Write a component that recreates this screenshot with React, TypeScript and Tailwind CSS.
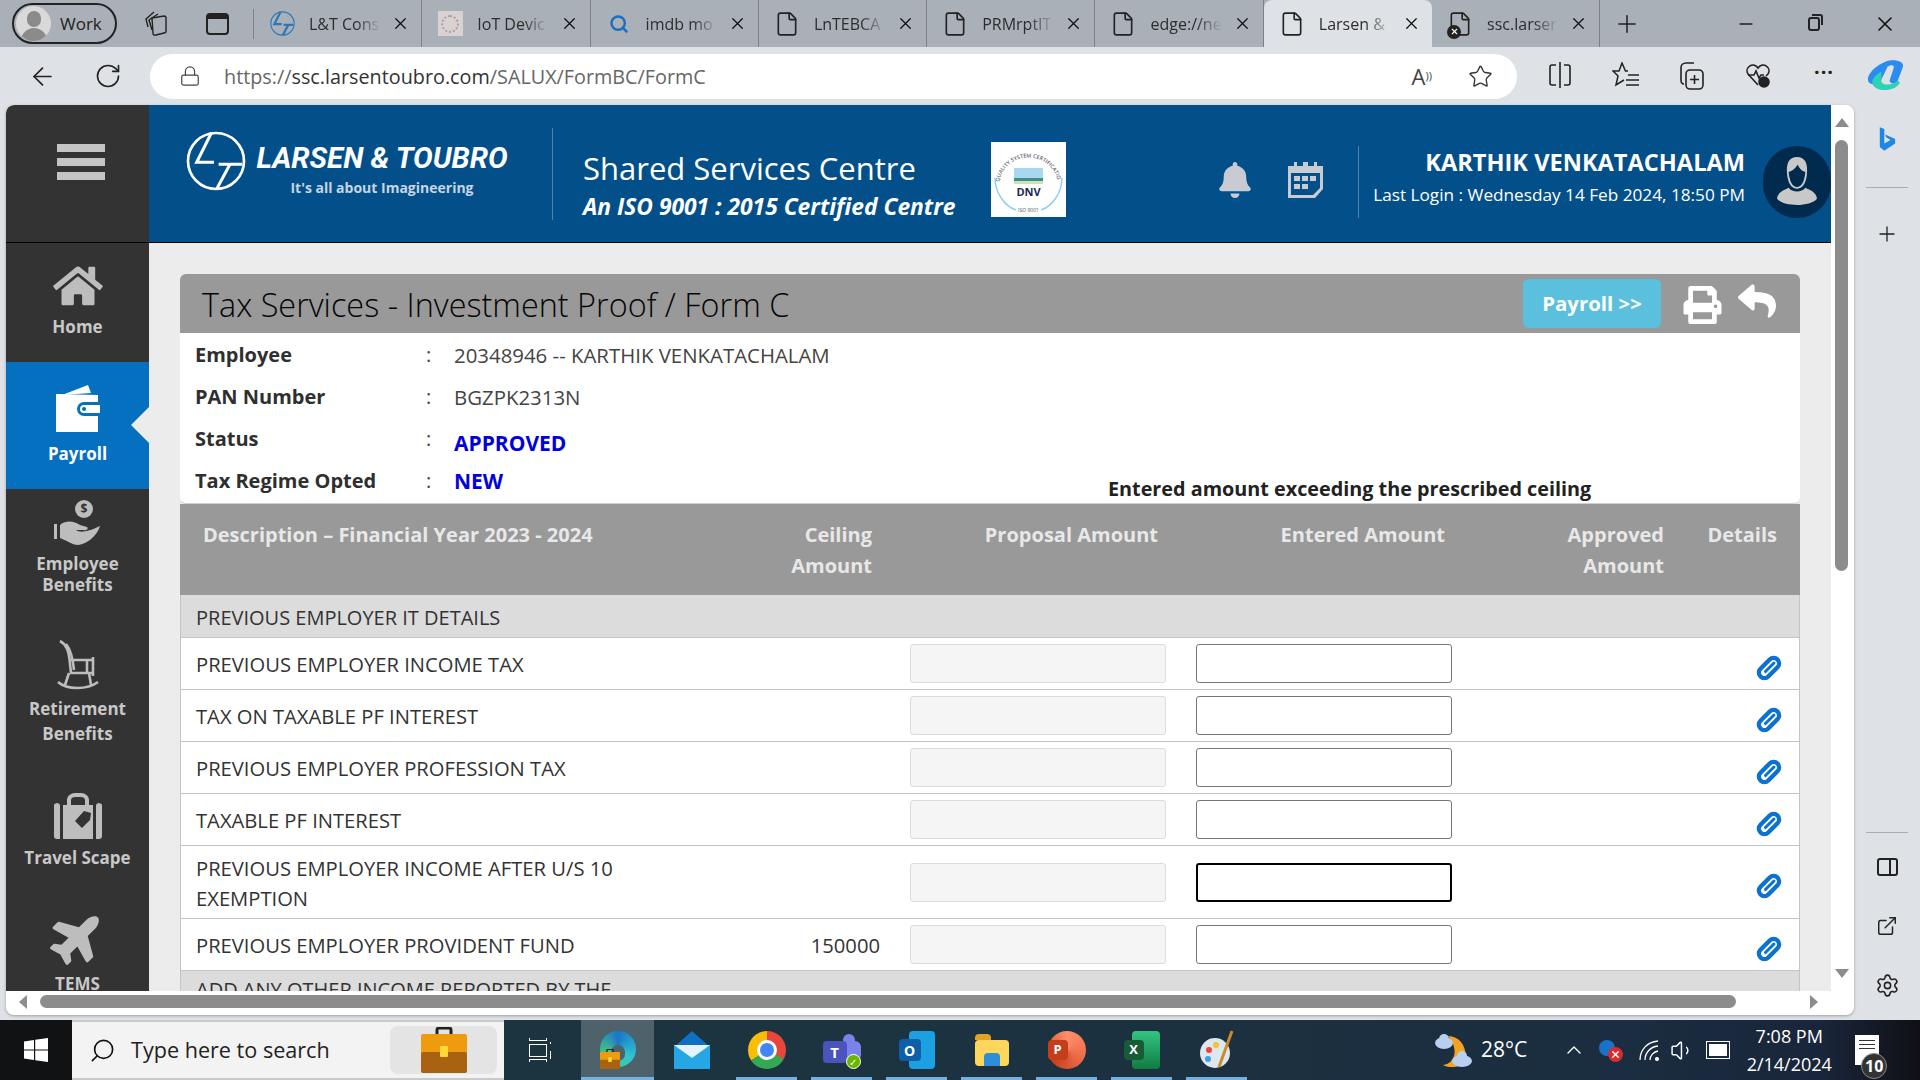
import type { ReactNode } from 'react';
import { ArrowLeft, RotateCw, Lock, Star, Plus, Minus, X, Search, ChevronUp, Volume1, Settings, ExternalLink, File } from 'lucide-react';
import { FaBell, FaPrint, FaReply, FaHome, FaPlane } from 'react-icons/fa';

const tabs = [
  { title: 'L&T Cons', icon: 'lt' },
  { title: 'IoT Devic', icon: 'seal' },
  { title: 'imdb mo', icon: 'search' },
  { title: 'LnTEBCA', icon: 'file' },
  { title: 'PRMrptIT', icon: 'file' },
  { title: 'edge://ne', icon: 'file' },
  { title: 'Larsen &', icon: 'file', active: true },
  { title: 'ssc.larser', icon: 'blocked' },
];

const rows = [
  { name: 'PREVIOUS EMPLOYER INCOME TAX' },
  { name: 'TAX ON TAXABLE PF INTEREST' },
  { name: 'PREVIOUS EMPLOYER PROFESSION TAX' },
  { name: 'TAXABLE PF INTEREST' },
  { name: 'PREVIOUS EMPLOYER INCOME AFTER U/S 10 EXEMPTION', tall: true, focused: true },
  { name: 'PREVIOUS EMPLOYER PROVIDENT FUND', ceiling: '150000' },
];

const gridCols = 'grid grid-cols-[519px_186px_286px_286px_212px_129px]';

function LtLogo({ className, weight = 9 }: { className?: string; weight?: number }) {
  return (
    <svg viewBox="48 56 180 180" className={className} fill="none" stroke="currentColor">
      <circle cx="138" cy="146" r="84" strokeWidth="8" />
      <path d="M124 62 L80 150 H132" strokeWidth={weight} />
      <path d="M146 156 H216 M180 156 L140 230" strokeWidth={weight} />
    </svg>
  );
}

function TabIcon({ kind }: { kind: string }) {
  if (kind === 'lt') return <LtLogo weight={16} className="h-[25px] w-[25px] text-[#2b78b8]" />;
  if (kind === 'seal')
    return (
      <div className="flex h-[25px] w-[25px] items-center justify-center bg-[#d8d2d2]">
        <div className="h-[18px] w-[18px] rounded-full border-2 border-dotted border-[#b79a9a]" />
      </div>
    );
  if (kind === 'search') return <Search size={20} strokeWidth={3} className="text-[#1f6fc0]" />;
  if (kind === 'blocked')
    return (
      <div className="relative">
        <File size={26} strokeWidth={1.5} className="text-[#222]" />
        <div className="absolute -bottom-[2px] left-0 flex h-[14px] w-[14px] items-center justify-center rounded-full bg-[#222]">
          <X size={9} strokeWidth={3} className="text-white" />
        </div>
      </div>
    );
  return <File size={26} strokeWidth={1.5} className="text-[#222]" />;
}

function BrowserTab({ title, icon, active }: { title: string; icon: string; active?: boolean }) {
  return (
    <div className={`flex h-full w-[168.3px] shrink-0 items-center pr-[11px] pl-[15px] ${active ? 'rounded-t-lg bg-[#dee1e6]' : 'border-r border-[#7d8185]'}`}>
      <div className="flex w-[26px] shrink-0 justify-center">
        <TabIcon kind={icon} />
      </div>
      <span className="ml-[14px] w-[72px] overflow-hidden text-[16px] whitespace-nowrap text-[#2d2d2d] [mask-image:linear-gradient(to_right,black_65%,transparent)]">{title}</span>
      <X size={19} strokeWidth={1.6} className="ml-auto shrink-0 text-[#111]" />
    </div>
  );
}

function Paperclip() {
  return (
    <svg viewBox="0 0 26 26" className="mt-[8px] h-[26px] w-[26px] text-[#0b72d1]" fill="none" stroke="currentColor">
      <g transform="rotate(45 13 13)">
        <rect x="7.5" y="1" width="11" height="24" rx="5.5" strokeWidth="4.4" />
        <path d="M13 6 V18" strokeWidth="3" strokeLinecap="round" />
      </g>
    </svg>
  );
}

function NavItem({ label, icon, className }: { label: ReactNode; icon: ReactNode; className: string }) {
  return (
    <div className={`relative flex shrink-0 flex-col items-center text-center text-[17px] font-bold text-[#c8c8c8] ${className}`}>
      {icon}
      {label}
    </div>
  );
}

function Sidebar() {
  return (
    <aside className="flex h-full w-[143px] shrink-0 flex-col overflow-hidden rounded-tl-lg bg-[#333333]">
      <div className="flex h-[138px] shrink-0 flex-col items-center gap-[6px] border-b border-black pt-[39px] pl-[7px]">
        <div className="h-[8px] w-[48px] bg-[#c4c4c4]" />
        <div className="h-[8px] w-[48px] bg-[#c4c4c4]" />
        <div className="h-[8px] w-[48px] bg-[#c4c4c4]" />
      </div>
      <NavItem className="h-[119px] pt-[21px] leading-[24px]" label="Home" icon={<FaHome className="mb-[7px] h-[44px] w-[50px] text-[#bdbdbd]" />} />
      <NavItem
        className="h-[127px] bg-[#0570c0] pt-[22px] leading-[24px] text-white"
        label="Payroll"
        icon={
          <>
            <svg viewBox="0 0 48 50" className="mb-[8px] h-[50px] w-[48px]" fill="white">
              <path d="M8 11 L34 1 L37 9 Z" />
              <path d="M4 10 H2 V48 H44 V32 H30 a7 7 0 0 1 0 -14 H44 V11 Z" />
              <path d="M30 21 H46 V29 H30 a4 4 0 0 1 0 -8 Z M30 23 a2 2 0 1 0 .1 0 Z" fillRule="evenodd" />
            </svg>
            <div className="absolute top-[45px] right-0 h-0 w-0 border-y-[18px] border-r-[18px] border-y-transparent border-r-[#ececec]" />
          </>
        }
      />
      <NavItem
        className="h-[139px] pt-[11px] leading-[21px]"
        label={<span>Employee<br />Benefits</span>}
        icon={
          <svg viewBox="0 0 48 46" className="mb-[7px] h-[46px] w-[48px] text-[#bdbdbd]" fill="currentColor">
            <circle cx="30" cy="9" r="9" />
            <text x="30" y="13" textAnchor="middle" fontSize="12" fontWeight="700" fill="#333">$</text>
            <rect x="0" y="24" width="3" height="15" />
            <path d="M6 25 C12 20 20 21 26 25 L33 27 C35 29 32 31 29 30 L22 30 C26 33 34 32 46 26 C44 34 34 44 24 45 C18 45 12 40 6 38 Z" />
          </svg>
        }
      />
      <NavItem
        className="h-[146px] pt-[12px] leading-[25px]"
        label={<span>Retirement<br />Benefits</span>}
        icon={
          <svg viewBox="0 0 42 50" className="mb-[6px] h-[50px] w-[42px] text-[#bdbdbd]" fill="none" stroke="currentColor" strokeWidth="2.6">
            <path d="M3 1 C9 4 12 10 13 24 L14 33 H37 M13 20 H36 M30 20 V33 M36 17 V36" />
            <path d="M9 4 C14 10 16 20 17 30" />
            <path d="M1 42 C10 50 30 50 41 42 M12 33 L8 45 M32 33 L34 45" />
          </svg>
        }
      />
      <NavItem
        className="h-[119px] pt-[19px] leading-[24px]"
        label="Travel Scape"
        icon={
          <svg viewBox="0 0 48 46" className="mb-[7px] h-[46px] w-[48px] text-[#bdbdbd]" fill="currentColor">
            <path fillRule="evenodd" d="M6 12 a3 3 0 0 0 -6 3 V43 a3 3 0 0 0 3 3 H6 Z M42 12 a3 3 0 0 1 6 3 V43 a3 3 0 0 1 -3 3 H42 Z M9 12 H13 V7 C13 3 17 0 21 0 H27 C31 0 35 3 35 7 V12 H39 V46 H9 Z M17 12 H31 V7 C31 5 29 4 27 4 H21 C19 4 17 5 17 7 Z M30 18 L37 20 L36 27 L28 35 L21 28 Z" />
          </svg>
        }
      />
      <NavItem
        className="pt-[16px] leading-[24px]"
        label="TEMS"
        icon={<FaPlane className="mb-[7px] h-[56px] w-[56px] -rotate-45 text-[#bdbdbd]" />}
      />
    </aside>
  );
}

function AppHeader() {
  return (
    <header className="flex h-[138px] shrink-0 items-center border-b border-black bg-[#034f8a] text-white">
      <div className="flex w-[403px] shrink-0 items-start pb-[9px] pl-[37px]">
        <LtLogo className="-mt-[11px] h-[60px] w-[60px]" />
        <div className="ml-[7px] flex w-[258px] flex-col items-center">
          <span className="font-['Roboto'] text-[29.4px] leading-[32px] font-bold whitespace-nowrap italic">LARSEN &amp; TOUBRO</span>
          <span className="mt-[5px] text-[14px] leading-[18px] font-bold text-[#c6d5e2]">It's all about Imagineering</span>
        </div>
      </div>
      <div className="h-[92px] w-px bg-[#4f83ab]" />
      <div className="flex w-[438px] shrink-0 flex-col pt-[19px] pl-[30px]">
        <span className="mt-[2px] text-[31px] leading-[44px] whitespace-nowrap">Shared Services Centre</span>
        <span className="mt-px text-[22.8px] leading-[32px] font-bold whitespace-nowrap italic">An ISO 9001 : 2015 Certified Centre</span>
      </div>
      <div className="mt-[12px] h-[75px] w-[75px] shrink-0 bg-white">
        <svg viewBox="0 0 75 75" className="h-[75px] w-[75px]">
          <path id="dnv-ring" d="M8 40 a30 30 0 0 1 59 0" fill="none" stroke="none" />
          <text fontSize="5.4" fontWeight="600" fill="#5c6670"><textPath href="#dnv-ring">QUALITY SYSTEM CERTIFICATION</textPath></text>
          <rect x="23" y="26" width="29" height="10" fill="#a7d8ef" />
          <rect x="23" y="36" width="29" height="3" fill="#3f8f8f" />
          <rect x="23" y="39" width="29" height="3" fill="#cfe3b0" />
          <text x="37.5" y="54" textAnchor="middle" fontSize="11" fontWeight="700" fill="#1b2a55">DNV</text>
          <path d="M4 36 C4 50 13 64 25 68 M71 36 C71 50 62 64 50 68" fill="none" stroke="#8fd0ee" strokeWidth="1.5" />
          <text x="37.5" y="70" textAnchor="middle" fontSize="5" fill="#555">ISO 9001</text>
        </svg>
      </div>
      <FaBell className="mt-[12px] ml-[153px] h-[36px] w-[32px] shrink-0 text-[#c8ccd2]" />
      <svg viewBox="0 0 35 36" className="mt-[12px] ml-[37px] h-[36px] w-[35px] shrink-0 text-[#c8ccd2]" fill="currentColor">
        <path fillRule="evenodd" d="M0 4 H6 V0 H9 V4 H15 V0 H20 V4 H26 V0 H29 V4 H35 V27 L27 36 H0 Z M3 11 V33 H25 L32 26 V11 Z" />
        <path d="M6 14 H12 V19 H6 Z M14 14 H20 V19 H14 Z M22 14 H28 V19 H22 Z M6 22 H12 V27 H6 Z M14 22 H20 V27 H14 Z" />
      </svg>
      <div className="mt-[16px] ml-[35px] h-[72px] w-px bg-[#4f83ab]" />
      <div className="mt-[8px] flex w-[386px] shrink-0 flex-col items-end">
        <span className="text-[23.6px] leading-[34px] font-bold whitespace-nowrap">KARTHIK VENKATACHALAM</span>
        <span className="mt-[1px] text-[17.2px] leading-[30px] whitespace-nowrap">Last Login : Wednesday 14 Feb 2024, 18:50 PM</span>
      </div>
      <div className="mt-[16px] ml-[18px] flex h-[72px] w-[68px] shrink-0 items-center justify-center overflow-hidden rounded-full bg-[#002a4e]">
        <svg viewBox="0 0 48 60" className="h-[50px] w-[42px] text-[#c8c8c8]" fill="currentColor">
          <path fillRule="evenodd" d="M24 0 C34 0 37 8 36 20 C35 32 30 38 24 38 C18 38 13 32 12 20 C11 8 14 0 24 0 Z M14 18 C15 30 19 36 24 36 C29 36 33 30 34 18 C30 17 26 13 25 9 C22 14 18 17 14 18 Z" />
          <path d="M14 37 C18 43 30 43 34 37 C40 40 47 42 48 50 C40 60 8 60 0 50 C1 42 8 40 14 37 Z" />
        </svg>
      </div>
    </header>
  );
}

function InfoRow({ label, value, extra }: { label: string; value: ReactNode; extra?: ReactNode }) {
  return (
    <div className="flex h-[42px] items-center pl-[15px] text-[20px]">
      <span className="w-[231px] shrink-0 font-bold text-[#2f2f2f]">{label}</span>
      <span className="w-[28px] shrink-0 text-[#444]">:</span>
      <div className="w-[654px] shrink-0">{value}</div>
      {extra}
    </div>
  );
}

function FormCard() {
  return (
    <div className="mx-[31px] mt-[31px] w-[1620px] shrink-0">
      <div className="flex h-[59px] items-center rounded-t-md bg-[#999999] pr-[22px] pl-[22px]">
        <h1 className="pt-px text-[32.4px] leading-none font-light text-[#050505]">Tax Services - Investment Proof / Form C</h1>
        <div className="ml-auto flex h-[49px] w-[138px] items-center justify-center rounded-md bg-[#5bc0de] text-[20.4px] font-bold text-white">Payroll &gt;&gt;</div>
        <FaPrint className="mt-[2px] ml-[22px] h-[38px] w-[39px] text-white" />
        <FaReply className="-mt-[6px] ml-[14px] h-[38px] w-[42px] text-white" />
      </div>
      <div className="rounded-b-md border-b border-[#cfcfcf] bg-white pt-px pb-px">
        <InfoRow label="Employee" value={<span className="text-[20.4px] text-[#444]">20348946 -- KARTHIK VENKATACHALAM</span>} />
        <InfoRow label="PAN Number" value={<span className="text-[20.4px] text-[#444]">BGZPK2313N</span>} />
        <InfoRow label="Status" value={<span className="relative top-[5px] text-[21px] font-bold text-[#0000dd]">APPROVED</span>} />
        <InfoRow
          label="Tax Regime Opted"
          value={<span className="relative top-px text-[21px] font-bold text-[#0000dd]">NEW</span>}
          extra={<span className="relative top-[8px] text-[19.8px] font-bold whitespace-nowrap text-[#222]">Entered amount exceeding the prescribed ceiling</span>}
        />
      </div>
      <div className={`${gridCols} h-[91px] bg-[#999999] pt-[15px] text-[20px] leading-[31px] font-bold text-[#e8e8e8]`}>
        <div className="pl-[23px]">Description – Financial Year 2023 - 2024</div>
        <div className="pr-[13px] text-right">Ceiling<br />Amount</div>
        <div className="pr-[13px] text-right">Proposal Amount</div>
        <div className="pr-[12px] text-right">Entered Amount</div>
        <div className="pr-[5px] text-right">Approved<br />Amount</div>
        <div className="pr-[21px] text-right">Details</div>
      </div>
      <div className="flex h-[43px] items-center border-x border-b border-[#c4c4c4] bg-[#dcdcdc] pt-[3px] pl-[15px] text-[20px] text-[#333]">PREVIOUS EMPLOYER IT DETAILS</div>
      {rows.map((row) => (
        <div key={row.name} className={`${gridCols} items-center border-x border-b border-[#c4c4c4] bg-white text-[20.2px] leading-[30px] text-[#333] ${row.tall ? 'h-[73px]' : 'h-[52px]'}`}>
          <div className={`pr-[50px] pl-[15px] ${row.tall ? 'pt-[2px]' : ''}`}>{row.name}</div>
          <div className="pr-[6px] text-right">{row.ceiling}</div>
          <div className="pl-[24px]">
            <input readOnly aria-label="Proposal amount" className="block h-[39px] w-[256px] rounded-[3px] border border-[#dcdcdc] bg-[#f5f5f5]" />
          </div>
          <div className="pl-[24px]">
            <input readOnly aria-label="Entered amount" className={`block h-[39px] w-[256px] rounded-[3px] bg-white ${row.focused ? 'border-2 border-black' : 'border border-[#767676]'}`} />
          </div>
          <div />
          <div className="flex justify-end pr-[17px]">
            <Paperclip />
          </div>
        </div>
      ))}
      <div className="h-[60px] border-x border-[#c4c4c4] bg-[#dcdcdc] pt-[4px] pl-[15px] text-[20px] leading-[30px] text-[#333]">ADD ANY OTHER INCOME REPORTED BY THE</div>
    </div>
  );
}

function ToolIcon({ children }: { children: ReactNode }) {
  return <div className="flex w-[66px] shrink-0 justify-center text-[#222]">{children}</div>;
}

function TaskItem({ children, underline, active }: { children: ReactNode; underline?: boolean; active?: boolean }) {
  return (
    <div className={`relative flex h-full shrink-0 items-center justify-center ${active ? 'w-[73px] bg-[#4e626b]' : 'w-[75px]'}`}>
      {children}
      {underline && <div className={`absolute bottom-0 h-[3px] bg-[#76b0e0] ${active ? 'inset-x-0' : 'left-[7px] w-[61px]'}`} />}
    </div>
  );
}

function Briefcase({ className }: { className: string }) {
  return (
    <svg viewBox="0 0 46 46" className={className}>
      <path d="M16 8 V3 a2 2 0 0 1 2 -2 H28 a2 2 0 0 1 2 2 V8" fill="none" stroke="#222" strokeWidth="3" />
      <rect x="0" y="7" width="46" height="20" rx="2" fill="#ee9b0f" />
      <rect x="0" y="25" width="46" height="21" rx="2" fill="#a9620f" />
      <rect x="19" y="19" width="8" height="11" rx="1" fill="#ffd83a" />
    </svg>
  );
}

export default function App() {
  return (
    <div className="flex h-[1080px] w-[1920px] flex-col overflow-hidden bg-[#dee1e6] font-['Open_Sans',sans-serif]">
      {/* Tab strip */}
      <div className="flex h-[47px] shrink-0 items-center bg-[#a9b0b7]">
        <div className="ml-[12px] flex h-[41px] w-[105px] shrink-0 items-center rounded-full border-2 border-[#222] pl-[2px]">
          <div className="relative h-[35px] w-[35px] overflow-hidden rounded-full bg-[#d9d9d9]">
            <div className="mx-auto mt-[5px] h-[16px] w-[14px] rounded-full bg-[#8b8b8b]" />
            <div className="mx-auto mt-[1px] h-[20px] w-[26px] rounded-t-full bg-[#8b8b8b]" />
          </div>
          <span className="ml-[9px] text-[17px] text-[#222]">Work</span>
        </div>
        <svg viewBox="0 0 24 26" className="ml-[27px] h-[26px] w-[24px] shrink-0" fill="none" stroke="#222" strokeWidth="1.4">
          <path d="M8 7 L20 5 a2 2 0 0 1 2 2 V20 a2 2 0 0 1 -2 2 L12 24 a2 2 0 0 1 -3 -2 Z" />
          <path d="M8 19 L5 9 L14 3 M4 16 L2 8 L10 1" />
        </svg>
        <div className="ml-[38px] h-[22px] w-[23px] shrink-0 rounded-[4px] border-2 border-t-[6px] border-[#222]" />
        <div className="ml-[24px] h-[30px] w-px shrink-0 bg-[#7d8185]" />
        {tabs.map((tab) => (
          <BrowserTab key={tab.title} title={tab.title} icon={tab.icon} active={tab.active} />
        ))}
        <Plus size={28} strokeWidth={1.3} className="ml-[13px] shrink-0 text-[#222]" />
        <Minus size={20} strokeWidth={2} className="ml-[95px] shrink-0 text-[#222]" />
        <div className="relative ml-[52px] h-[14px] w-[12px] shrink-0 rounded-[3px] border-2 border-[#222]">
          <div className="absolute -top-[5px] -right-[5px] h-[11px] w-[11px] rounded-tr-[3px] border-t-2 border-r-2 border-[#222]" />
        </div>
        <X size={24} strokeWidth={1.6} className="ml-[53px] shrink-0 text-[#111]" />
      </div>

      {/* Toolbar */}
      <div className="flex h-[58px] shrink-0 items-center">
        <ArrowLeft size={29} strokeWidth={1.4} className="ml-[28px] shrink-0 text-[#222]" />
        <RotateCw size={28} strokeWidth={1.4} className="ml-[37px] shrink-0 text-[#222]" />
        <div className="ml-[28px] flex h-[45px] w-[1367px] shrink-0 items-center rounded-full bg-white pr-[24px] pl-[29px]">
          <Lock size={22} strokeWidth={1.3} className="text-[#444]" />
          <span className="ml-[23px] pt-px text-[19.8px] text-[#666]">https://<span className="text-[#333]">ssc.larsentoubro.com</span>/SALUX/FormBC/FormC</span>
          <span className="ml-auto text-[22px] leading-none text-[#444]">A<sup className="text-[11px]">))</sup></span>
          <Star size={25} strokeWidth={1.3} className="ml-[36px] text-[#333]" />
        </div>
        <div className="ml-[10px] flex shrink-0">
          <ToolIcon>
            <svg viewBox="0 0 24 26" className="h-[26px] w-[24px]" fill="none" stroke="#222" strokeWidth="1.6">
              <path d="M8 3 H4 a2 2 0 0 0 -2 2 V21 a2 2 0 0 0 2 2 H8 M16 3 H20 a2 2 0 0 1 2 2 V21 a2 2 0 0 1 -2 2 H16 M12 0 V26" />
            </svg>
          </ToolIcon>
          <ToolIcon>
            <svg viewBox="0 0 28 26" className="h-[26px] w-[28px]" fill="none" stroke="#222" strokeWidth="1.5">
              <path d="M16 9 H13.5 L10 1 L7 9 H1 L6 14 L4 23 L12 18" />
              <path d="M16 13 H27 M14 18 H27 M14 23 H27" />
            </svg>
          </ToolIcon>
          <ToolIcon>
            <svg viewBox="0 0 26 28" className="h-[28px] w-[26px]" fill="none" stroke="#222" strokeWidth="1.6">
              <path d="M5 22 C3 22 2 20 2 18 V6 C2 3 4 1 7 1 H15" />
              <rect x="7" y="8" width="17" height="19" rx="4" />
              <path d="M15.5 13 V22 M11 17.5 H20" />
            </svg>
          </ToolIcon>
          <ToolIcon>
            <svg viewBox="0 0 26 26" className="h-[26px] w-[26px]" fill="none" stroke="#222" strokeWidth="1.6">
              <path d="M13 23 L3 12 C-1 6 8 -1 13 6 C18 -1 27 6 23 12 L21 14" />
              <path d="M3 13 H9 L11 9 L14 16 L16 13 H19" />
              <circle cx="19" cy="20" r="5" fill="#222" />
            </svg>
          </ToolIcon>
          <ToolIcon><span className="text-[20px] leading-none font-bold tracking-[1px]">···</span></ToolIcon>
        </div>
        <svg viewBox="0 0 36 56" preserveAspectRatio="none" className="ml-[10px] h-[32px] w-[37px] shrink-0">
          <path d="M22 1 C30 -1 36 4 35 12 L30 36 C28 44 22 42 22 36 L26 14 C27 8 22 8 20 12 L14 34 C12 44 2 46 1 36 C0 24 10 6 22 1 Z" fill="#2a8bf0" />
          <path d="M14 20 C6 28 2 40 8 48 C14 56 28 54 32 40 L30 36 C26 44 16 46 14 38 Z" fill="#2fd0b5" />
        </svg>
      </div>

      {/* Browser window + edge sidebar */}
      <div className="flex h-[910px] shrink-0">
        <div className="ml-[6px] flex h-full w-[1848px] shrink-0 flex-col rounded-lg bg-white shadow-[0_1px_3px_rgba(0,0,0,0.3)]">
          <div className="flex h-[886px] shrink-0">
            <div className="flex h-full w-[1825px] shrink-0 overflow-hidden rounded-tl-lg">
              <Sidebar />
              <div className="flex h-full min-w-0 flex-1 flex-col overflow-hidden bg-[#ececec]">
                <AppHeader />
                <FormCard />
              </div>
            </div>
            <div className="flex w-[23px] shrink-0 flex-col items-center pr-[2px]">
              <div className="mt-[13px] h-0 w-0 border-x-[7px] border-b-[9px] border-x-transparent border-b-[#8c8c8c]" />
              <div className="mt-[13px] h-[431px] w-[13px] rounded-full bg-[#8c8c8c]" />
              <div className="mt-auto mb-[13px] h-0 w-0 border-x-[7px] border-t-[9px] border-x-transparent border-t-[#8c8c8c]" />
            </div>
          </div>
          <div className="flex h-[24px] shrink-0 items-center pb-[3px] pl-[13px]">
            <div className="h-0 w-0 border-y-[7px] border-r-[8px] border-y-transparent border-r-[#8c8c8c]" />
            <div className="ml-[13px] h-[13px] w-[1696px] rounded-full bg-[#8c8c8c]" />
            <div className="ml-[74px] h-0 w-0 border-y-[7px] border-l-[8px] border-y-transparent border-l-[#8c8c8c]" />
          </div>
        </div>

        <div className="flex w-[66px] shrink-0 flex-col items-center text-[#222]">
          <svg viewBox="0 0 20 28" className="mt-[21px] h-[26px] w-[18px]">
            <path d="M2 1 L7 3 V19 L14 15 L9 12 L8 9 L19 14 V19 L7 27 L2 23 Z" fill="#1f86e5" />
          </svg>
          <div className="mt-[35px] h-px w-[42px] bg-[#a9adb3]" />
          <Plus size={24} strokeWidth={1.3} className="mt-[34px]" />
          <div className="mt-auto mb-[25px] h-px w-[42px] bg-[#a9adb3]" />
          <div className="mb-[39px] flex h-[18px] w-[21px] justify-end rounded-[3px] border-2 border-[#222]"><div className="h-full w-[2px] translate-x-[-5px] bg-[#222]" /></div>
          <ExternalLink size={22} strokeWidth={1.6} className="mb-[36px]" />
          <Settings size={25} strokeWidth={1.5} className="mb-[17px]" />
        </div>
      </div>

      <div className="h-[5px] shrink-0" />

      {/* Windows taskbar */}
      <div className="flex h-[60px] shrink-0 items-stretch bg-[linear-gradient(to_right,#1c3340_0%,#1c3340_45%,#1b2d40_85%,#19253a_95%,#101014_100%)] text-white">
        <div className="flex w-[72px] shrink-0 items-center justify-center bg-[#101214]">
          <svg viewBox="0 0 24 24" className="h-[24px] w-[24px]" fill="white">
            <path d="M0 3.5 L10 2 V11.4 H0 Z M11.2 1.8 L24 0 V11.4 H11.2 Z M0 12.6 H10 V22 L0 20.5 Z M11.2 12.6 H24 V24 L11.2 22.2 Z" />
          </svg>
        </div>
        <div className="flex w-[432px] shrink-0 items-center border-y-2 border-[#c9c9c9] bg-[#f3f3f3] pr-[7px] pl-[17px]">
          <Search size={27} strokeWidth={1.5} className="-scale-x-100 text-[#111]" />
          <span className="ml-[15px] text-[21.6px] text-[#222]">Type here to search</span>
          <div className="ml-auto flex h-[48px] w-[107px] items-center justify-center rounded-lg bg-[#e4e4e4]">
            <Briefcase className="h-[46px] w-[46px]" />
          </div>
        </div>
        <div className="flex w-[77px] shrink-0 items-center justify-center pr-[5px]">
          <div className="flex h-[24px] w-[18px] flex-col justify-between">
            <div className="h-[3px] border-x border-b border-white" />
            <div className="h-[13px] border border-white" />
            <div className="h-[3px] border-x border-t border-white" />
          </div>
          <div className="ml-[3px] flex h-[24px] flex-col justify-around">
            <div className="h-[2px] w-px bg-white" />
            <div className="h-[8px] w-px bg-white" />
          </div>
        </div>
        <TaskItem active underline>
          <div className="relative h-[38px] w-[36px]">
            <div className="h-[36px] w-[36px] rounded-full bg-[conic-gradient(#1b76c9,#2fc4d0,#4ed07a,#1b76c9)]" />
            <div className="absolute top-[14px] left-[11px] h-[16px] w-[14px] rounded-full bg-[#4e626b]" />
            <Briefcase className="absolute bottom-0 left-0 h-[20px] w-[20px]" />
          </div>
        </TaskItem>
        <TaskItem>
          <svg viewBox="0 0 36 38" className="h-[40px] w-[36px]">
            <path d="M18 0 L36 16 V38 H0 V16 Z" fill="#0f6fc0" />
            <path d="M0 14 H36 V38 H0 Z" fill="#27a6e6" />
            <path d="M0 14 L18 27 L36 14 Z" fill="#e5f4fc" />
          </svg>
        </TaskItem>
        <TaskItem underline>
          <div className="flex h-[38px] w-[38px] items-center justify-center rounded-full bg-[conic-gradient(#e8453c_0_33%,#34a853_33%_66%,#fbbc05_66%_100%)]">
            <div className="h-[20px] w-[20px] rounded-full border-[3px] border-white bg-[#4285f4]" />
          </div>
        </TaskItem>
        <TaskItem underline>
          <div className="relative h-[38px] w-[38px]">
            <div className="absolute top-[3px] right-[6px] h-[12px] w-[12px] rounded-full bg-[#7b83eb]" />
            <div className="absolute top-[10px] right-0 h-[20px] w-[22px] rounded-md bg-[#7b83eb]" />
            <div className="absolute top-[10px] left-0 flex h-[22px] w-[24px] items-center justify-center rounded-sm bg-[#4b53bc] text-[15px] font-bold">T</div>
            <div className="absolute right-0 bottom-0 flex h-[15px] w-[15px] items-center justify-center rounded-full border border-white bg-[#6bb700] text-[10px] leading-none">✓</div>
          </div>
        </TaskItem>
        <TaskItem underline>
          <div className="relative h-[38px] w-[36px]">
            <div className="absolute top-0 right-0 h-[38px] w-[26px] rounded-sm bg-[#1ba1e2]" />
            <div className="absolute top-[8px] left-0 flex h-[22px] w-[22px] items-center justify-center rounded-sm bg-[#0f5fa8] text-[14px] font-bold">O</div>
          </div>
        </TaskItem>
        <TaskItem underline>
          <div className="relative h-[32px] w-[34px]">
            <div className="h-[6px] w-[16px] rounded-t-sm bg-[#e0a420]" />
            <div className="h-[26px] w-[34px] rounded-sm bg-[#ffd65c]" />
            <div className="absolute bottom-0 left-[9px] h-[13px] w-[16px] rounded-t-sm bg-[#2d8fd8]" />
          </div>
        </TaskItem>
        <TaskItem underline>
          <div className="relative h-[38px] w-[38px]">
            <div className="h-[38px] w-[38px] rounded-full bg-[conic-gradient(#ff8f6b,#ed6c47,#c43e1c,#ff8f6b)]" />
            <div className="absolute top-[9px] left-0 flex h-[20px] w-[20px] items-center justify-center rounded-sm bg-[#c43e1c] text-[13px] font-bold">P</div>
          </div>
        </TaskItem>
        <TaskItem underline>
          <div className="relative h-[38px] w-[36px]">
            <div className="absolute top-0 right-0 h-[38px] w-[28px] rounded-sm bg-[linear-gradient(to_bottom,#33c481,#107c41)]" />
            <div className="absolute top-[9px] left-0 flex h-[20px] w-[20px] items-center justify-center rounded-sm bg-[#185c37] text-[13px] font-bold">X</div>
          </div>
        </TaskItem>
        <TaskItem underline>
          <svg viewBox="0 0 36 40" className="h-[40px] w-[36px]">
            <ellipse cx="16" cy="23" rx="15" ry="15" fill="#dfe7ee" />
            <circle cx="10" cy="20" r="3" fill="#e8453c" />
            <circle cx="17" cy="15" r="3" fill="#f2c230" />
            <circle cx="9" cy="29" r="3" fill="#3aa0e8" />
            <path d="M33 1 L20 37" stroke="#c98a2e" strokeWidth="3" />
          </svg>
        </TaskItem>
        <svg viewBox="0 0 38 33" className="ml-[180px] h-[33px] w-[38px] shrink-0 self-center">
          <path d="M14 2 C30 2 36 22 28 30 C24 34 14 34 9 31 C20 30 26 16 14 2 Z" fill="#f3a31f" />
          <ellipse cx="10" cy="9" rx="9" ry="6" fill="#b8cff0" />
          <circle cx="10" cy="5" r="5" fill="#b8cff0" />
          <ellipse cx="28" cy="27" rx="10" ry="6" fill="#b8cff0" />
          <circle cx="28" cy="22" r="5" fill="#b8cff0" />
        </svg>
        <span className="ml-[9px] self-center text-[21px]">28°C</span>
        <ChevronUp size={24} strokeWidth={1.4} className="ml-[35px] self-center" />
        <div className="relative ml-[13px] h-[24px] w-[24px] self-center">
          <div className="absolute top-[2px] left-0 h-[16px] w-[16px] rounded-full bg-[#1a73c8]" />
          <div className="absolute right-0 bottom-0 flex h-[15px] w-[15px] items-center justify-center rounded-full bg-[#d92b2b]"><X size={11} strokeWidth={3} /></div>
        </div>
        <svg viewBox="0 0 24 24" className="ml-[14px] h-[24px] w-[24px] self-center" fill="none" stroke="white" strokeWidth="1.3">
          <path d="M3 22 C3 12 10 4 21 3 M8 22 C8 15 13 9 21 8 M13 22 C13 18 16 14 21 13" />
          <circle cx="20" cy="21" r="1.4" fill="white" />
        </svg>
        <Volume1 size={25} strokeWidth={1.4} className="ml-[9px] self-center" />
        <div className="ml-[11px] flex h-[18px] w-[24px] items-center self-center border border-white p-[2px]"><div className="h-full w-full bg-white" /></div>
        <div className="ml-[9px] flex w-[100px] shrink-0 flex-col items-center justify-center text-[18px] leading-[28px]">
          <span>7:08 PM</span>
          <span>2/14/2024</span>
        </div>
        <div className="relative ml-[16px] w-[30px] shrink-0 self-center">
          <div className="flex h-[30px] w-[24px] flex-col gap-[3px] bg-white px-[4px] pt-[5px]">
            <div className="h-px bg-[#333]" />
            <div className="h-px bg-[#333]" />
            <div className="h-px bg-[#333]" />
          </div>
          <div className="absolute -right-[2px] -bottom-[14px] flex h-[26px] w-[26px] items-center justify-center rounded-full border border-[#888] bg-[#333] text-[16px] font-bold">10</div>
        </div>
      </div>
    </div>
  );
}
